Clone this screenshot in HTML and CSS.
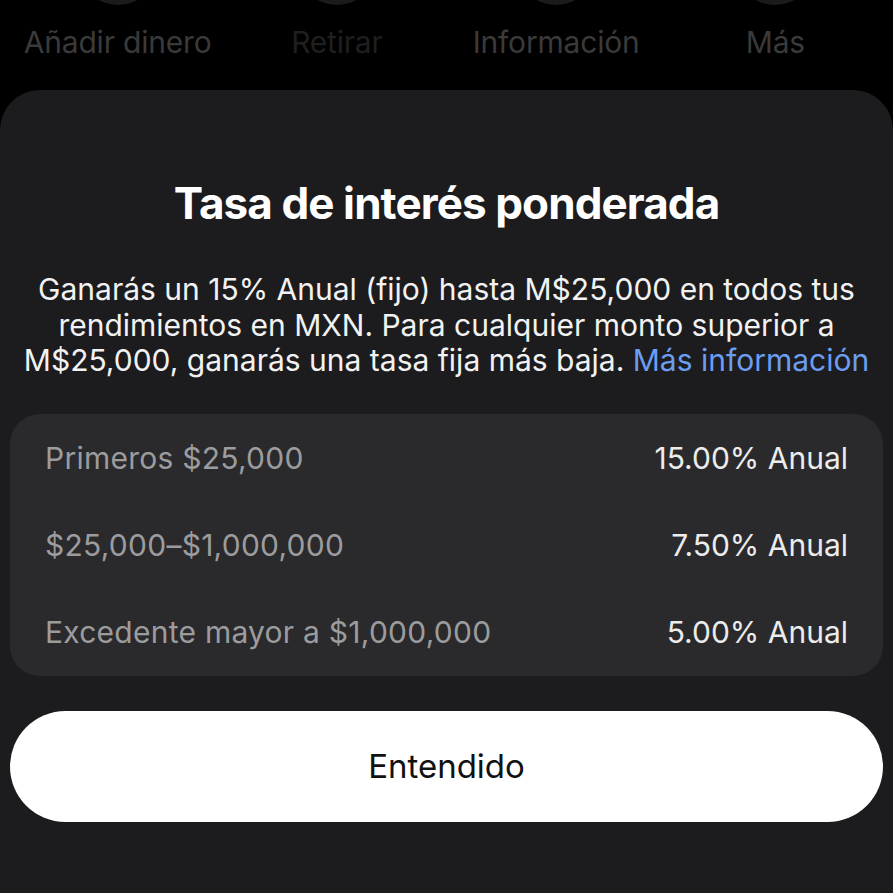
FILE: index.html
```html
<!DOCTYPE html>
<html lang="es">

<head>
    <meta charset="UTF-8">
    <meta name="viewport" content="width=device-width, initial-scale=1.0">
    <title>Tasa de interés ponderada</title>
    <link rel="stylesheet" href="styles.css">
</head>

<body>
    <div class="actions">
        <div class="action">
            <span class="action-icon"></span>
            <span class="action-label">Añadir dinero</span>
        </div>
        <div class="action">
            <span class="action-icon"></span>
            <span class="action-label disabled">Retirar</span>
        </div>
        <div class="action">
            <span class="action-icon"></span>
            <span class="action-label">Información</span>
        </div>
        <div class="action">
            <span class="action-icon"></span>
            <span class="action-label">Más</span>
        </div>
    </div>

    <div class="sheet">
        <h1 class="title">Tasa de interés ponderada</h1>
        <p class="desc">
            Ganarás un 15% Anual (fijo) hasta M$25,000 en todos tus rendimientos en MXN. Para cualquier monto superior a M$25,000, ganarás una tasa fija más baja. <a href="#" class="link">Más información</a>
        </p>
        <div class="rates">
            <div class="rate-row">
                <span class="rate-name">Primeros $25,000</span>
                <span class="rate-value">15.00% Anual</span>
            </div>
            <div class="rate-row">
                <span class="rate-name">$25,000–$1,000,000</span>
                <span class="rate-value">7.50% Anual</span>
            </div>
            <div class="rate-row">
                <span class="rate-name">Excedente mayor a $1,000,000</span>
                <span class="rate-value">5.00% Anual</span>
            </div>
        </div>
        <button class="btn">Entendido</button>
    </div>
</body>

</html>
```

FILE: styles.css
```css
* {
    margin: 0;
    box-sizing: border-box;
    padding: 0;
}

html,
body {
    height: 100%;
    overflow: hidden;
}

body {
    background: #000;
    font-family: Inter, "Noto Sans", sans-serif;
    color: #fff;
}

.actions {
    display: grid;
    grid-template-columns: repeat(4, 1fr);
    height: 90px;
    padding: 0 8px;
}

.action {
    display: flex;
    flex-direction: column;
    align-items: center;
}

.action-icon {
    width: 80px;
    height: 80px;
    margin-top: -75px;
    border-radius: 50%;
    background: #1b1b1b;
}

.action-label {
    margin-top: 20px;
    font-size: 30px;
    line-height: 34px;
    letter-spacing: -0.2px;
    color: #3a3a3b;
}

.action-label.disabled {
    color: #1f1f1f;
}

.sheet {
    height: 803px;
    padding: 91px 10px 0;
    border-radius: 40px 40px 0 0;
    background: #1c1c1e;
}

.title {
    font-size: 44px;
    line-height: 44px;
    font-weight: 700;
    letter-spacing: -0.9px;
    text-align: center;
}

.desc {
    margin-top: 47px;
    font-size: 30px;
    line-height: 35.5px;
    text-align: center;
    color: #f2f2f2;
}

.link {
    color: #6b9df2;
    text-decoration: none;
}

.rates {
    margin-top: 35px;
    padding: 1px 35px 0;
    border-radius: 30px;
    background: #2a2a2c;
}

.rate-row {
    display: flex;
    justify-content: space-between;
    align-items: center;
    height: 87px;
    font-size: 30px;
}

.rate-name {
    letter-spacing: 0.25px;
    color: #9c9c9e;
}

.rate-value {
    color: #ececec;
}

.btn {
    display: block;
    width: 100%;
    height: 111px;
    margin-top: 35px;
    border: none;
    border-radius: 56px;
    background: #fff;
    font-family: inherit;
    font-size: 33px;
    color: #111;
}
```
